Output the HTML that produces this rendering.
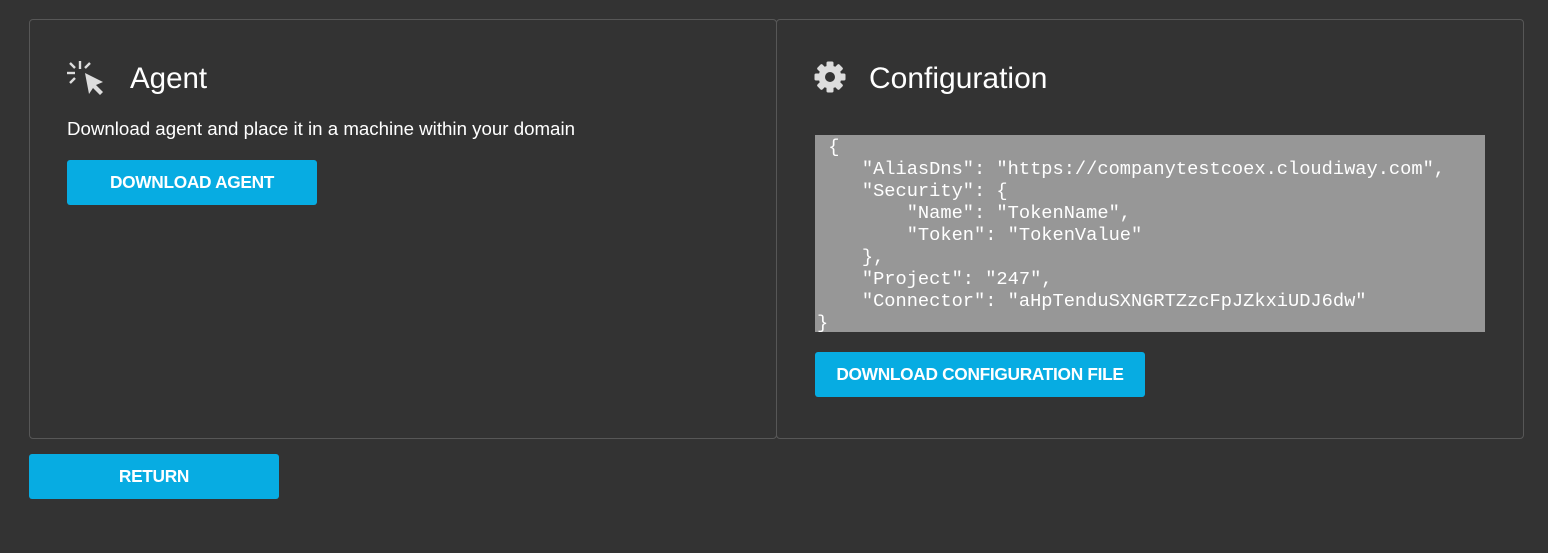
<!DOCTYPE html>
<html><head><meta charset="utf-8"><style>
html,body{margin:0;padding:0;background:#333;width:1548px;height:553px;overflow:hidden;font-family:"Liberation Sans",sans-serif;color:#fff}
.panel{position:absolute;top:19px;height:420px;border:1px solid #575757;border-radius:4px;box-sizing:border-box}
.title{position:absolute;top:59px;line-height:40px}
.btn{position:absolute;background:#07ace2;border-radius:3px;color:#fff;font-weight:bold;font-size:17.3px;text-align:center;letter-spacing:-0.3px}
pre{position:absolute;left:815px;top:135px;width:670px;height:197px;margin:0;background:#979797;color:#fff;font-family:"Liberation Mono",monospace;font-size:18.7px;line-height:22px;padding:1px 0 0 2px;box-sizing:border-box}
</style></head><body>
<div class="panel" style="left:29px;width:748px"></div>
<div class="panel" style="left:776px;width:748px"></div>

<svg style="position:absolute;left:60px;top:55px" width="50" height="45" viewBox="60 55 50 45">
<g stroke="#ddd" stroke-width="2.4">
<line x1="80" y1="61" x2="80" y2="69"/>
<line x1="67" y1="73" x2="75" y2="73"/>
<line x1="70" y1="63" x2="75" y2="68"/>
<line x1="90" y1="63" x2="85" y2="68"/>
<line x1="70" y1="83" x2="75" y2="78"/>
</g>
<path d="M85 73 L103 82 L96 85 L103 92 L100 95 L93 88 L89 94 Z" fill="#ddd"/>
</svg>
<div class="title" style="left:130px;font-size:29.5px">Agent</div>
<div style="position:absolute;left:67px;top:118px;font-size:18.7px;line-height:22px">Download agent and place it in a machine within your domain</div>
<div class="btn" style="left:67px;top:160px;width:250px;height:45px;line-height:45px">DOWNLOAD AGENT</div>

<svg style="position:absolute;left:814px;top:61px" width="32" height="32" viewBox="-16 -16 32 32">
<g fill="#ddd">
<circle r="11.5"/>
<rect x="-3.5" y="-15.5" width="7" height="31" rx="1.5"/>
<rect x="-3.5" y="-15.5" width="7" height="31" rx="1.5" transform="rotate(45)"/>
<rect x="-3.5" y="-15.5" width="7" height="31" rx="1.5" transform="rotate(90)"/>
<rect x="-3.5" y="-15.5" width="7" height="31" rx="1.5" transform="rotate(135)"/>
</g>
<circle r="5" fill="#333"/>
</svg>
<div class="title" style="left:869px;font-size:30px">Configuration</div>
<pre> {
    "AliasDns": "https://companytestcoex.cloudiway.com",
    "Security": {
        "Name": "TokenName",
        "Token": "TokenValue"
    },
    "Project": "247",
    "Connector": "aHpTenduSXNGRTZzcFpJZkxiUDJ6dw"
}</pre>
<div class="btn" style="left:815px;top:352px;width:330px;height:45px;line-height:45px">DOWNLOAD CONFIGURATION FILE</div>

<div class="btn" style="left:29px;top:454px;width:250px;height:45px;line-height:45px">RETURN</div>
</body></html>
